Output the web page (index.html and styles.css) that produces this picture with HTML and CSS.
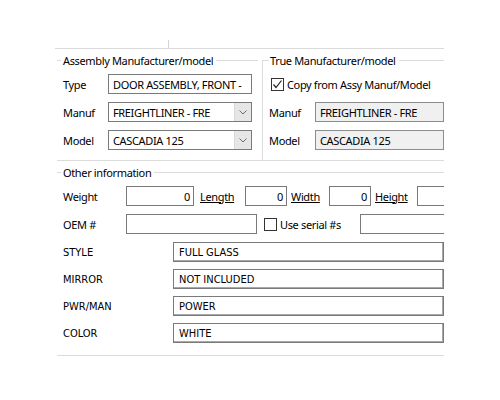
FILE: index.html
```html
<!DOCTYPE html>
<html lang="en">
<head>
  <meta charset="UTF-8">
  <title>Part details</title>
  <link rel="stylesheet" href="styles.css">
</head>
<body>
  <div class="screen">
    <div class="ruler"><span class="tick"></span></div>

    <div class="panel">
      <div class="top">
        <section class="group assy">
          <div class="legend"><span>Assembly Manufacturer/model</span></div>
          <div class="rows">
            <div class="row"><label>Type</label><div class="field">DOOR ASSEMBLY, FRONT -</div></div>
            <div class="row">
              <label>Manuf</label>
              <div class="field combo"><span class="value">FREIGHTLINER - FRE</span><span class="drop"><svg width="8" height="5" viewBox="0 0 8 5"><polyline points="0.5,0.5 4,4 7.5,0.5" fill="none" stroke="#6d6d6d" stroke-width="1"/></svg></span></div>
            </div>
            <div class="row">
              <label>Model</label>
              <div class="field combo"><span class="value">CASCADIA 125</span><span class="drop"><svg width="8" height="5" viewBox="0 0 8 5"><polyline points="0.5,0.5 4,4 7.5,0.5" fill="none" stroke="#6d6d6d" stroke-width="1"/></svg></span></div>
            </div>
          </div>
        </section>

        <section class="group true">
          <div class="legend"><span>True Manufacturer/model</span></div>
          <div class="rows">
            <div class="row">
              <span class="check checked"><svg width="11" height="11" viewBox="0 0 11 11"><polyline points="1.5,5.5 4,8.5 9.5,1.5" fill="none" stroke="#222" stroke-width="1.2"/></svg></span>
              <span class="check-label">Copy from Assy Manuf/Model</span>
            </div>
            <div class="row"><label>Manuf</label><div class="field ro">FREIGHTLINER - FRE</div></div>
            <div class="row"><label>Model</label><div class="field ro">CASCADIA 125</div></div>
          </div>
        </section>
      </div>

      <section class="group other">
        <div class="legend"><span>Other information</span></div>
        <div class="rows">
          <div class="row">
            <label class="wide">Weight</label>
            <div class="field num weight">0</div>
            <a class="link length">Length</a>
            <div class="field num">0</div>
            <a class="link width">Width</a>
            <div class="field num">0</div>
            <a class="link height">Height</a>
            <div class="field num last"></div>
          </div>
          <div class="row">
            <label class="wide">OEM #</label>
            <div class="field oem"></div>
            <span class="check"></span>
            <span class="check-label serial-label">Use serial #s</span>
            <div class="field serial"></div>
          </div>
        </div>

        <div class="attrs">
          <div class="row"><label>STYLE</label><div class="field box">FULL GLASS</div></div>
          <div class="row"><label>MIRROR</label><div class="field box">NOT INCLUDED</div></div>
          <div class="row"><label>PWR/MAN</label><div class="field box">POWER</div></div>
          <div class="row"><label>COLOR</label><div class="field box">WHITE</div></div>
        </div>
      </section>
    </div>
  </div>
</body>
</html>
```

FILE: styles.css
```css
body {
  margin: 0;
  background-color: #fff;
  font-family: "Noto Sans", "DejaVu Sans", sans-serif;
  font-size: 11px;
  letter-spacing: -0.35px;
  color: #000;
}

.screen {
  width: 389px;
  padding: 40px 0 0 55px;
}

.ruler {
  display: flex;
  height: 8px;
  border-bottom: 1px solid #dadada;
}

.ruler .tick {
  width: 1px;
  height: 8px;
  margin-left: 113px;
  background-color: #d4d4d4;
}

.panel {
  width: 387px;
  margin-left: 2px;
  overflow: hidden;
}

.top {
  display: flex;
  height: 111px;
  border-bottom: 1px solid #dcdcdc;
}

/* group box caption with the frame line running through it */
.legend {
  display: flex;
  align-items: center;
  height: 14px;
  white-space: nowrap;
}

.legend::before {
  content: "";
  width: 4px;
  margin-right: 2px;
  border-top: 1px solid #dcdcdc;
}

.legend::after {
  content: "";
  flex: 1;
  margin-left: 3px;
  border-top: 1px solid #dcdcdc;
}

.group {
  padding-top: 4px;
}

.rows {
  display: flex;
  flex-direction: column;
  gap: 8px;
  margin-top: 7px;
  padding-left: 6px;
}

.row {
  display: flex;
  align-items: center;
  height: 20px;
}

.row label {
  flex: none;
  width: 45px;
}

.field {
  display: flex;
  align-items: center;
  flex: none;
  box-sizing: border-box;
  height: 20px;
  padding: 0 4px;
  border: 1px solid #7a7a7a;
  background-color: #fff;
  white-space: nowrap;
  overflow: hidden;
}

.assy {
  width: 201px;
}

.assy .field {
  width: 144px;
}

.combo {
  padding-right: 0;
}

.combo .value {
  flex: 1;
}

.combo .drop {
  display: flex;
  align-items: center;
  justify-content: center;
  width: 16px;
  height: 100%;
  border-left: 1px solid #d9d9d9;
  background-color: #e6e6e6;
}

.true {
  flex: 1;
  margin: 11px 0 0 4px;
  padding-top: 0;
  border-left: 1px solid #dcdcdc;
}

.true .legend {
  margin-top: -7px;
}

.true .legend::before {
  width: 6px;
  margin-right: 1px;
}

.true label {
  width: 46px;
}

.ro {
  width: 129px;
  background-color: #f0f0f0;
  border-color: #8c8c8c;
}

.check {
  display: flex;
  align-items: center;
  justify-content: center;
  flex: none;
  box-sizing: border-box;
  width: 13px;
  height: 13px;
  border: 1px solid #333;
  background-color: #fff;
}

.true .check {
  margin-left: 2px;
}

.check-label {
  flex: none;
  margin-left: 3px;
  white-space: nowrap;
}

.other {
  padding-bottom: 12px;
  border-bottom: 1px solid #dcdcdc;
}

.other label.wide {
  width: 63px;
}

.num {
  justify-content: flex-end;
  width: 42px;
  padding-right: 3px;
}

.num.weight {
  width: 68px;
}

.num.last {
  width: 60px;
}

.link {
  flex: none;
  color: #000;
  text-decoration: underline;
}

.link.length {
  width: 45px;
  margin-left: 6px;
}

.link.width {
  width: 38px;
  margin-left: 4px;
}

.link.height {
  width: 42px;
  margin-left: 4px;
}

.oem {
  width: 131px;
}

.other .check {
  margin-left: 7px;
}

.serial-label {
  width: 80px;
}

.serial {
  width: 100px;
}

/* free-form attribute list, older control style */
.attrs {
  display: flex;
  flex-direction: column;
  gap: 7px;
  margin-top: 8px;
  padding-left: 6px;
  font-family: "DejaVu Sans Condensed", "DejaVu Sans", sans-serif;
  font-size: 11px;
  letter-spacing: 0;
}

.attrs label {
  width: 110px;
}

.box {
  width: 271px;
  padding-left: 5px;
  border-color: #7a7a7a;
  box-shadow: inset -1px -1px 0 #a8a8a8;
}
```
